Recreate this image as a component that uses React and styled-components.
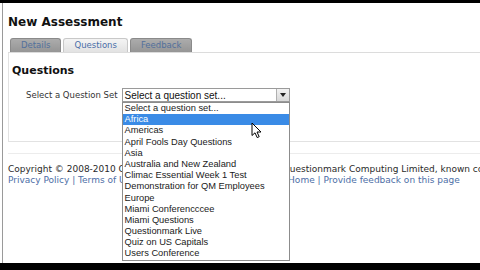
import React from 'react'
import styled, { createGlobalStyle } from 'styled-components'

const Global = createGlobalStyle`
  html, body {
    margin: 0;
    padding: 0;
    background: #000;
    width: 480px;
    height: 270px;
    overflow: hidden;
  }
  * { box-sizing: border-box; }
`

const tabs = [
  { label: 'Details', active: false },
  { label: 'Questions', active: true },
  { label: 'Feedback', active: false },
]

const options = [
  'Select a question set...',
  'Africa',
  'Americas',
  'April Fools Day Questions',
  'Asia',
  'Australia and New Zealand',
  'Climac Essential Week 1 Test',
  'Demonstration for QM Employees',
  'Europe',
  'Miami Conferencccee',
  'Miami Questions',
  'Questionmark Live',
  'Quiz on US Capitals',
  'Users Conference',
]

const Cursor = () => (
  <CursorSvg width="12" height="17" viewBox="0 0 12 17">
    <path
      d="M1 1 L1 13.5 L4 10.8 L6.2 15.6 L8.2 14.7 L6 10 L10 10 Z"
      fill="#fff"
      stroke="#000"
      strokeWidth="1"
      strokeLinejoin="round"
    />
  </CursorSvg>
)

const App = () => {
  return (
    <Frame>
      <Global />
      <Screen>
        <Title>New Assessment</Title>
        <TabRow>
          {tabs.map((t) => (
            <Tab key={t.label} $active={t.active}>{t.label}</Tab>
          ))}
        </TabRow>
        <Panel>
          <Heading>Questions</Heading>
          <FieldRow>
            <Label>Select a Question Set</Label>
            <SelectWrap>
              <SelectBox>
                <span>Select a question set...</span>
                <Arrow>
                  <svg width="6" height="4" viewBox="0 0 6 4">
                    <path d="M0 0 L6 0 L3 4 Z" fill="#222" />
                  </svg>
                </Arrow>
              </SelectBox>
              <ListBox>
                {options.map((o, i) => (
                  <Option key={o} $selected={i === 1}>{o}</Option>
                ))}
              </ListBox>
            </SelectWrap>
          </FieldRow>
        </Panel>
        <Footer>
          <Copyright>
            Copyright © 2008-2010 Questionmark Corporation Inc., and Questionmark Computing Limited, known collectively as Questionmark.
          </Copyright>
          <Links>
            <a>Privacy Policy</a> | <a>Terms of Use</a> | <a>Site Map</a> | <a>Help</a> | <a>Questionmark Home</a> | <a>Provide feedback on this page</a>
          </Links>
        </Footer>
        <Cursor />
      </Screen>
    </Frame>
  )
}

const Frame = styled.div`
  width: 480px;
  height: 270px;
  padding-top: 3px;
  background: #000;
`

const Screen = styled.div`
  position: relative;
  height: 260px;
  background: #fff;
  padding: 12px 0 0 5px;
  border-left: 1px solid #9a9a9a;
  box-shadow: -2px 0 0 #fff;
  margin-left: 2px;
  overflow: hidden;
  font-family: "DejaVu Sans", Verdana, sans-serif;
`

const Title = styled.h1`
  margin: 0 0 9px 0;
  font-size: 12px;
  line-height: 14px;
  font-weight: bold;
  color: #111;
  white-space: nowrap;
`

const TabRow = styled.div`
  display: flex;
  gap: 2px;
  padding-left: 2px;
  height: 15px;
  border-bottom: 1px solid #dcdcdc;
  width: 600px;
`

const Tab = styled.div`
  height: 14px;
  padding: 0 10px;
  border: 1px solid ${(p) => (p.$active ? '#c8c8c8' : '#8a8a8a')};
  border-bottom: none;
  border-radius: 3px 3px 0 0;
  background: ${(p) =>
    p.$active
      ? 'linear-gradient(#f4f4f4, #e2e2e2)'
      : 'linear-gradient(#acacac, #959595)'};
  color: ${(p) => (p.$active ? '#4a6ea8' : '#52709c')};
  font-size: 8.5px;
  line-height: 13px;
  white-space: nowrap;
`

const Panel = styled.section`
  height: 89px;
  width: 600px;
  padding: 11px 0 0 3px;
  border: 1px solid #e2e2e2;
  border-top: none;
`

const Heading = styled.h2`
  margin: 0 0 10px 0;
  font-size: 11px;
  line-height: 14px;
  font-weight: bold;
  color: #111;
`

const FieldRow = styled.div`
  display: flex;
  align-items: center;
  gap: 4px;
  padding-left: 14px;
`

const Label = styled.span`
  font-size: 8.5px;
  color: #333;
  white-space: nowrap;
`

const SelectWrap = styled.div`
  position: relative;
  width: 168px;
`

const SelectBox = styled.div`
  display: flex;
  align-items: center;
  justify-content: space-between;
  height: 14px;
  border: 1px solid #9a9a9a;
  background: #fff;
  padding-left: 2px;
  font-family: "Liberation Sans", Arial, sans-serif;
  font-size: 10px;
  color: #111;
  white-space: nowrap;
`

const Arrow = styled.div`
  display: flex;
  align-items: center;
  justify-content: center;
  width: 13px;
  height: 12px;
  border-left: 1px solid #b0b0b0;
  background: linear-gradient(#f2f2f2, #d8d8d8);
`

const ListBox = styled.div`
  position: absolute;
  top: 14px;
  left: 0;
  width: 168px;
  height: 159px;
  border: 1px solid #8c8c8c;
  background: #fff;
  z-index: 2;
`

const Option = styled.div`
  height: 11.2px;
  line-height: 11.2px;
  padding-left: 2px;
  font-family: "Liberation Sans", Arial, sans-serif;
  font-size: 9.3px;
  white-space: nowrap;
  color: ${(p) => (p.$selected ? '#fff' : '#1a1a1a')};
  background: ${(p) => (p.$selected ? '#3a8be6' : 'transparent')};
`

const Footer = styled.footer`
  margin-top: 11px;
  width: 700px;
  padding-top: 10px;
  border-top: 1px solid #ececec;
  font-size: 9px;
  line-height: 11px;
  white-space: nowrap;
`

const Copyright = styled.div`
  color: #2a2a2a;
`

const Links = styled.div`
  color: #4d6ea6;
  a { color: #4d6ea6; text-decoration: none; }
`

const CursorSvg = styled.svg`
  position: absolute;
  left: 248px;
  top: 119px;
  z-index: 3;
`

export default App
